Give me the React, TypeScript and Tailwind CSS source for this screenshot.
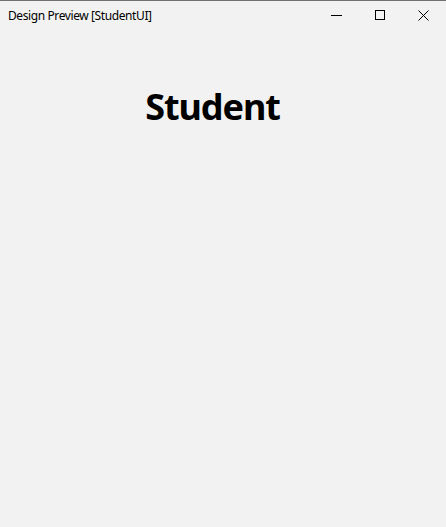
export default function App() {
  return (
    <div className="w-[446px] h-[527px] bg-[#f2f2f2] border-t border-[#707070] flex flex-col" style={{ fontFamily: '"Noto Sans", "Open Sans", sans-serif' }}>
      <div className="h-[31px] flex items-center relative">
        <span className="ml-[8px] text-[12px] tracking-[-0.4px] text-black leading-none mt-[-1px]">Design Preview [StudentUI]</span>
        <div className="absolute left-[331px] top-[14px] w-[11px] h-px bg-black" />
        <div className="absolute left-[375px] top-[9px] w-[10px] h-[10px] border border-black" />
        <svg className="absolute left-[418px] top-[9px]" width="11" height="11" viewBox="0 0 11 11">
          <path d="M0.5 0.5 L10.5 10.5 M10.5 0.5 L0.5 10.5" stroke="black" strokeWidth="1" />
        </svg>
      </div>
      <div className="flex justify-center pr-[21px] pt-[57px]">
        <h1 className="text-[36px] font-bold tracking-[-1.1px] text-black leading-none">Student</h1>
      </div>
    </div>
  );
}
